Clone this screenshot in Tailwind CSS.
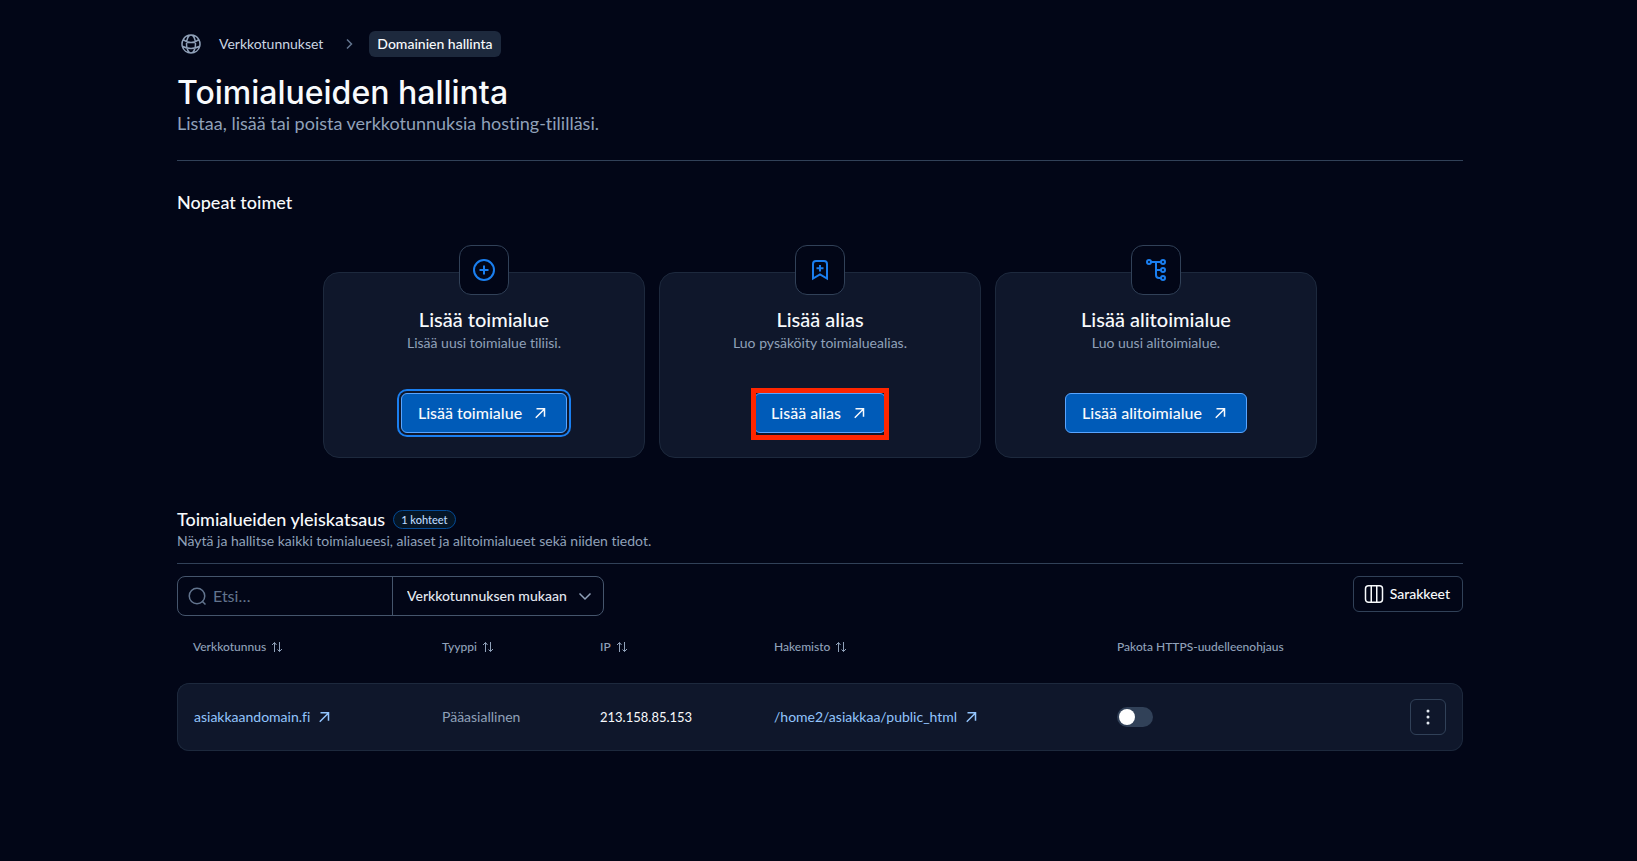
<!DOCTYPE html>
<html lang="fi">

<head>
    <meta charset="UTF-8" />
    <meta name="viewport" content="width=device-width, initial-scale=1.0" />
    <title>Toimialueiden hallinta</title>
    <script src="https://cdn.jsdelivr.net/npm/@tailwindcss/browser@4"></script>
</head>

<body class="bg-[#020617] min-h-screen text-slate-50 font-['Lato',sans-serif] [font-variant-ligatures:none]">

    <!-- shared icons -->
    <svg class="hidden">
        <symbol id="arrow" viewBox="0 0 20 20">
            <path d="M5.750 14.750 14.500 6M6.500 5.750h8v8" fill="none" stroke="currentColor" stroke-width="1.5" />
        </symbol>
        <symbol id="sort" viewBox="0 0 12 12">
            <path d="M3.500 11V1.500M1 4l2.500-2.500L5.500 4M8.500 1v9.500M6.500 8.500l2 2L11 8" fill="none" stroke="currentColor" />
        </symbol>
    </svg>

    <main class="max-w-[1289px] mx-auto pl-[3px] pt-[31px] pb-8">

        <!-- breadcrumb -->
        <nav aria-label="Breadcrumb" class="flex items-center h-[26px] text-sm">
            <svg class="size-6 ml-0.5 text-slate-400" viewBox="0 0 24 24" fill="none" stroke="currentColor" stroke-width="1.5">
                <path d="M12 21a9.004 9.004 0 0 0 8.716-6.747M12 21a9.004 9.004 0 0 1-8.716-6.747M12 21c2.485 0 4.500-4.030 4.500-9S14.485 3 12 3m0 18c-2.485 0-4.500-4.030-4.500-9S9.515 3 12 3m0 0a8.997 8.997 0 0 1 7.843 4.582M12 3a8.997 8.997 0 0 0-7.843 4.582m15.686 0A11.953 11.953 0 0 1 12 10.500c-2.998 0-5.740-1.100-7.843-2.918m15.686 0A8.959 8.959 0 0 1 21 12c0 .778-.099 1.533-.284 2.253m0 0A17.919 17.919 0 0 1 12 16.500c-3.162 0-6.133-.815-8.716-2.247m0 0A9.015 9.015 0 0 1 3 12c0-1.605.420-3.113 1.157-4.418" />
            </svg>
            <a href="#" class="ml-4 text-slate-300">Verkkotunnukset</a>
            <svg class="size-4 ml-[18px] mr-3 text-slate-500" viewBox="0 0 16 16" fill="none" stroke="currentColor" stroke-width="1.5">
                <path d="m6 3.500 4.500 4.500L6 12.500" />
            </svg>
            <a href="#" aria-current="page" class="bg-slate-800 rounded-md px-2 leading-[26px] font-medium">Domainien hallinta</a>
        </nav>

        <!-- title -->
        <header class="mt-[18px] pb-[25px] border-b border-slate-700">
            <h1 class="text-[32px] leading-9 font-medium font-['Inter',sans-serif]">Toimialueiden hallinta</h1>
            <p class="text-lg leading-6 text-slate-400">Listaa, lisää tai poista verkkotunnuksia hosting-tililläsi.</p>
        </header>

        <!-- quick actions -->
        <section>
            <h2 class="mt-[27px] text-lg leading-7 font-medium">Nopeat toimet</h2>
            <div class="mt-14 grid grid-cols-3 gap-[14px] max-w-[994px] mx-auto">

                <div class="relative flex flex-col items-center bg-slate-900 border border-slate-800 rounded-2xl pt-8 pb-6 text-center">
                    <div class="absolute -top-7 size-[50px] grid place-items-center bg-[#020617] border border-slate-700 rounded-xl text-[#1a7ff0]">
                        <svg class="size-6" viewBox="0 0 24 24" fill="none" stroke="currentColor" stroke-width="2">
                            <circle cx="12" cy="12" r="10" />
                            <path d="M12 7.500v9M7.500 12h9" />
                        </svg>
                    </div>
                    <h3 class="text-xl leading-7 font-medium">Lisää toimialue</h3>
                    <p class="text-sm leading-5 text-slate-400">Lisää uusi toimialue tiliisi.</p>
                    <button class="mt-10 h-10 px-4 flex items-center gap-2 font-medium bg-[#005bb8] border border-[#59a5ff] rounded-md ring-2 ring-[#1a7ff0] ring-offset-2 ring-offset-slate-900">Lisää toimialue
                        <svg class="size-5"><use href="#arrow" /></svg>
                    </button>
                </div>

                <div class="relative flex flex-col items-center bg-slate-900 border border-slate-800 rounded-2xl pt-8 pb-6 text-center">
                    <div class="absolute -top-7 size-[50px] grid place-items-center bg-[#020617] border border-slate-700 rounded-xl text-[#1a7ff0]">
                        <svg class="size-6" viewBox="0 0 24 24" fill="none" stroke="currentColor" stroke-width="2">
                            <path d="M5 20.500V6a3 3 0 0 1 3-3h8a3 3 0 0 1 3 3v14.500l-7-4z" />
                            <path d="M12 7v6.500M8.500 10.250h7" />
                        </svg>
                    </div>
                    <h3 class="text-xl leading-7 font-medium">Lisää alias</h3>
                    <p class="text-sm leading-5 text-slate-400">Luo pysäköity toimialuealias.</p>
                    <div class="relative mt-10">
                        <button class="h-10 px-4 flex items-center gap-2 font-medium bg-[#005bb8] border border-[#59a5ff] rounded-md">Lisää alias
                            <svg class="size-5"><use href="#arrow" /></svg>
                        </button>
                        <span class="absolute -inset-x-[3px] -top-[5px] -bottom-[7px] border-5 border-[#ff2600] pointer-events-none"></span>
                    </div>
                </div>

                <div class="relative flex flex-col items-center bg-slate-900 border border-slate-800 rounded-2xl pt-8 pb-6 text-center">
                    <div class="absolute -top-7 size-[50px] grid place-items-center bg-[#020617] border border-slate-700 rounded-xl text-[#1a7ff0]">
                        <svg class="size-6" viewBox="0 0 24 24" fill="none" stroke="currentColor" stroke-width="2">
                            <circle cx="5" cy="4" r="2" />
                            <circle cx="19" cy="4" r="2" />
                            <circle cx="19" cy="12" r="2" />
                            <circle cx="19" cy="20" r="2" />
                            <path d="M7 4h10M12 4v13a3 3 0 0 0 3 3h2M12 12h5" />
                        </svg>
                    </div>
                    <h3 class="text-xl leading-7 font-medium">Lisää alitoimialue</h3>
                    <p class="text-sm leading-5 text-slate-400">Luo uusi alitoimialue.</p>
                    <button class="mt-10 h-10 px-4 flex items-center gap-2 font-medium bg-[#005bb8] border border-[#59a5ff] rounded-md">Lisää alitoimialue
                        <svg class="size-5"><use href="#arrow" /></svg>
                    </button>
                </div>
            </div>
        </section>

        <!-- overview -->
        <section class="mt-[49px]">
            <div class="pb-3 border-b border-slate-700">
                <div class="flex items-center gap-2">
                    <h2 class="text-lg leading-6 font-medium">Toimialueiden yleiskatsaus</h2>
                    <span class="px-[7px] leading-[17px] text-[11px] font-medium text-blue-200 bg-[#051525] border border-[#034a94] rounded-full">1 kohteet</span>
                </div>
                <p class="text-sm leading-5 text-slate-400">Näytä ja hallitse kaikki toimialueesi, aliaset ja alitoimialueet sekä niiden tiedot.</p>
            </div>

            <!-- toolbar -->
            <div class="mt-3 flex items-start justify-between">
                <div class="flex h-10 border border-slate-600 rounded-lg">
                    <label class="flex items-center w-[214px] pl-[7px] text-slate-500">
                        <svg class="size-6 shrink-0" viewBox="0 0 24 24" fill="none" stroke="currentColor" stroke-width="1.5">
                            <circle cx="12" cy="12" r="7.750" />
                            <path d="m17 17 3.500 3.500" />
                        </svg>
                        <input type="text" aria-label="Etsi" placeholder="Etsi…" class="ml-1 w-full min-w-0 text-base text-slate-200 placeholder:text-slate-500 outline-none" />
                    </label>
                    <div class="relative border-l border-slate-600">
                        <select aria-label="Hakuperuste" class="appearance-none h-full pl-[14px] pr-9 text-sm font-medium text-slate-200 outline-none">
                            <option>Verkkotunnuksen mukaan</option>
                        </select>
                        <svg class="absolute right-[10px] top-[11px] size-4 text-slate-400 pointer-events-none" viewBox="0 0 16 16" fill="none" stroke="currentColor" stroke-width="1.5">
                            <path d="m2.500 5.500 5.500 5.500 5.500-5.500" />
                        </svg>
                    </div>
                </div>
                <button class="h-9 pl-2 pr-3 flex items-center gap-1 text-sm font-medium border border-slate-700 rounded-md">
                    <svg class="size-6" viewBox="0 0 24 24" fill="none" stroke="currentColor" stroke-width="1.5">
                        <rect x="3.500" y="3.750" width="17" height="16.500" rx="3" />
                        <path d="M9.250 4v16M14.750 4v16" />
                    </svg>
                    Sarakkeet
                </button>
            </div>

            <!-- domains -->
            <table class="mt-[19px] w-full table-fixed border-separate border-spacing-0 text-left text-sm">
                <thead>
                    <tr class="text-xs text-slate-400 align-top *:pt-1">
                        <th class="w-[249px] h-12 pl-4 font-medium"><button class="flex items-center gap-[5px]">Verkkotunnus <svg class="size-3"><use href="#sort" /></svg></button></th>
                        <th class="w-[158px] pl-4 font-medium"><button class="flex items-center gap-[5px]">Tyyppi <svg class="size-3"><use href="#sort" /></svg></button></th>
                        <th class="w-[174px] pl-4 font-medium"><button class="flex items-center gap-[5px]">IP <svg class="size-3"><use href="#sort" /></svg></button></th>
                        <th class="w-[343px] pl-4 font-medium"><button class="flex items-center gap-[5px]">Hakemisto <svg class="size-3"><use href="#sort" /></svg></button></th>
                        <th class="pl-4 font-medium">Pakota HTTPS-uudelleenohjaus</th>
                        <th class="w-[70px]"></th>
                    </tr>
                </thead>
                <tbody>
                    <tr class="*:bg-slate-900 *:border-y *:border-slate-800">
                        <td class="pl-4 rounded-l-xl border-l">
                            <a href="#" class="flex items-center gap-1 text-[#93c5fd]">asiakkaandomain.fi <svg class="size-5"><use href="#arrow" /></svg></a>
                        </td>
                        <td class="pl-4 text-slate-400">Pääasiallinen</td>
                        <td class="pl-4 text-[13px]">213.158.85.153</td>
                        <td class="pl-4">
                            <a href="#" class="flex items-center gap-1 text-[#93c5fd]">/home2/asiakkaa/public_html <svg class="size-5"><use href="#arrow" /></svg></a>
                        </td>
                        <td class="pl-4">
                            <input type="checkbox" role="switch" aria-label="Pakota HTTPS-uudelleenohjaus" class="block appearance-none w-9 h-5 p-0.5 bg-slate-700 rounded-full before:block before:size-4 before:bg-white before:rounded-full checked:bg-blue-600 checked:before:ml-4" />
                        </td>
                        <td class="py-[15px] pr-4 rounded-r-xl border-r">
                            <button aria-label="Toiminnot" class="size-9 ml-auto grid place-items-center border border-slate-700 rounded-md text-slate-200">
                                <svg class="size-5" viewBox="0 0 20 20" fill="currentColor">
                                    <circle cx="10" cy="4" r="1.500" />
                                    <circle cx="10" cy="10" r="1.500" />
                                    <circle cx="10" cy="16" r="1.500" />
                                </svg>
                            </button>
                        </td>
                    </tr>
                </tbody>
            </table>
        </section>
    </main>

</body>

</html>
